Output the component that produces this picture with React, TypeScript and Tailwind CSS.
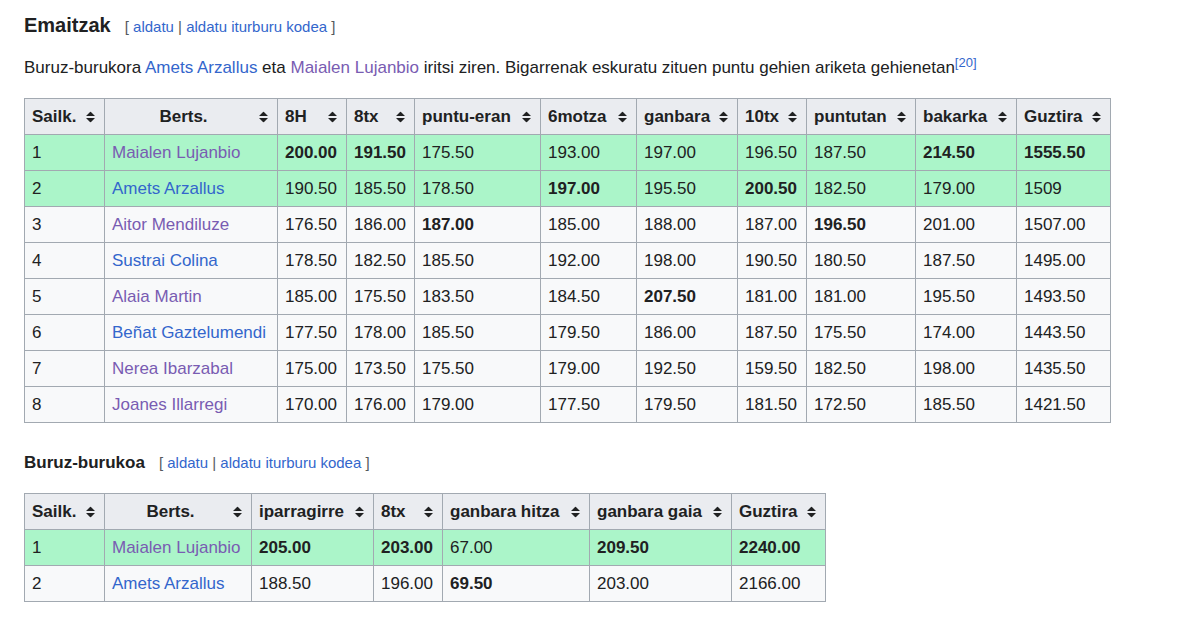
import React from 'react'

const V = 'text-[#795cb2]'
const B = 'text-[#3366cc]'

function SortIcon() {
  return (
    <svg width="9" height="11" viewBox="0 0 9 11" className="absolute right-[9px] top-1/2 -translate-y-1/2">
      <path d="M4.5 0 L9 4.5 H0 Z M4.5 11 L0 6.5 H9 Z" fill="#202122" />
    </svg>
  )
}

function Edit() {
  return (
    <span className="ml-[14px] text-[15px] font-normal text-[#54595d]">
      [ <span className={B}>aldatu</span> | <span className={B}>aldatu iturburu kodea</span> ]
    </span>
  )
}

type Row = { cells: (string | [string])[]; name: string; visited: boolean; win?: boolean }

function Table({ widths, heads, rows }: { widths: number[]; heads: string[]; rows: Row[] }) {
  return (
    <table className="border-collapse border border-[#a2a9b1] bg-[#f8f9fa] text-[17px] text-[#202122] table-fixed">
      <colgroup>
        {widths.map((w, i) => <col key={i} style={{ width: w }} />)}
      </colgroup>
      <thead>
        <tr className="h-[36px]">
          {heads.map((h, i) => (
            <th key={h} className={`relative border border-[#a2a9b1] bg-[#eaecf0] pl-[7px] pr-[22px] font-bold whitespace-nowrap ${i === 1 ? 'text-center' : 'text-left'}`}>
              {h}
              <SortIcon />
            </th>
          ))}
        </tr>
      </thead>
      <tbody>
        {rows.map((r, i) => (
          <tr key={i} className={`h-[36px] ${r.win ? 'bg-[#abf5c9]' : ''}`}>
            <td className="border border-[#a2a9b1] px-[7px]">{i + 1}</td>
            <td className={`border border-[#a2a9b1] px-[7px] whitespace-nowrap ${r.visited ? V : B}`}>{r.name}</td>
            {r.cells.map((c, j) => (
              <td key={j} className={`border border-[#a2a9b1] px-[7px] whitespace-nowrap ${Array.isArray(c) ? 'font-bold' : ''}`}>
                {Array.isArray(c) ? c[0] : c}
              </td>
            ))}
          </tr>
        ))}
      </tbody>
    </table>
  )
}

const rows1: Row[] = [
  { name: 'Maialen Lujanbio', visited: true, win: true, cells: [['200.00'], ['191.50'], '175.50', '193.00', '197.00', '196.50', '187.50', ['214.50'], ['1555.50']] },
  { name: 'Amets Arzallus', visited: false, win: true, cells: ['190.50', '185.50', '178.50', ['197.00'], '195.50', ['200.50'], '182.50', '179.00', '1509'] },
  { name: 'Aitor Mendiluze', visited: true, cells: ['176.50', '186.00', ['187.00'], '185.00', '188.00', '187.00', ['196.50'], '201.00', '1507.00'] },
  { name: 'Sustrai Colina', visited: false, cells: ['178.50', '182.50', '185.50', '192.00', '198.00', '190.50', '180.50', '187.50', '1495.00'] },
  { name: 'Alaia Martin', visited: true, cells: ['185.00', '175.50', '183.50', '184.50', ['207.50'], '181.00', '181.00', '195.50', '1493.50'] },
  { name: 'Beñat Gaztelumendi', visited: false, cells: ['177.50', '178.00', '185.50', '179.50', '186.00', '187.50', '175.50', '174.00', '1443.50'] },
  { name: 'Nerea Ibarzabal', visited: true, cells: ['175.00', '173.50', '175.50', '179.00', '192.50', '159.50', '182.50', '198.00', '1435.50'] },
  { name: 'Joanes Illarregi', visited: true, cells: ['170.00', '176.00', '179.00', '177.50', '179.50', '181.50', '172.50', '185.50', '1421.50'] },
]

const rows2: Row[] = [
  { name: 'Maialen Lujanbio', visited: true, win: true, cells: [['205.00'], ['203.00'], '67.00', ['209.50'], ['2240.00']] },
  { name: 'Amets Arzallus', visited: false, cells: ['188.50', '196.00', ['69.50'], '203.00', '2166.00'] },
]

export default function App() {
  return (
    <div className="min-h-[618px] bg-white px-6 pt-[11px] text-[#202122]" style={{ fontFamily: '"Liberation Sans", Arial, sans-serif' }}>
      <h2 className="flex items-baseline text-[20px] font-bold leading-[28px]">
        Emaitzak <Edit />
      </h2>
      <p className="mt-[14px] text-[17px] leading-[26px]">
        Buruz-burukora <span className={B}>Amets Arzallus</span> eta <span className={V}>Maialen Lujanbio</span> iritsi ziren. Bigarrenak eskuratu zituen puntu gehien ariketa gehienetan<sup className={`${B} text-[13px]`}>[20]</sup>
      </p>
      <div className="mt-[17px]">
        <Table
          widths={[80, 173, 69, 68, 126, 96, 101, 69, 109, 101, 94]}
          heads={['Sailk.', 'Berts.', '8H', '8tx', 'puntu-eran', '6motza', 'ganbara', '10tx', 'puntutan', 'bakarka', 'Guztira']}
          rows={rows1}
        />
      </div>
      <h3 className="mt-[27px] flex items-baseline text-[17px] font-bold leading-[26px]">
        Buruz-burukoa <Edit />
      </h3>
      <div className="mt-[17px]">
        <Table
          widths={[80, 147, 122, 69, 147, 142, 94]}
          heads={['Sailk.', 'Berts.', 'iparragirre', '8tx', 'ganbara hitza', 'ganbara gaia', 'Guztira']}
          rows={rows2}
        />
      </div>
    </div>
  )
}
